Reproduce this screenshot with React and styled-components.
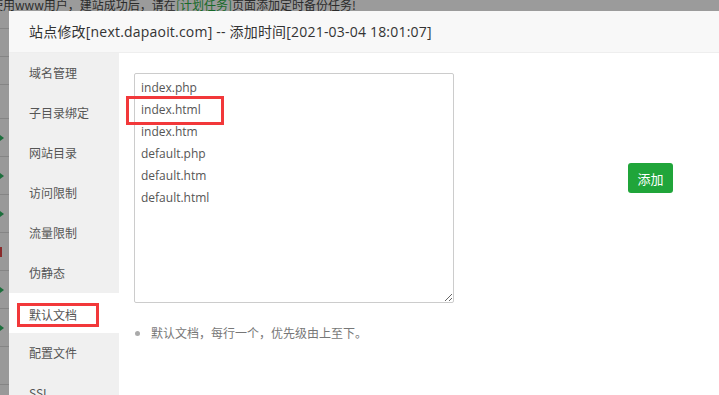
import React from 'react';
import styled, { createGlobalStyle } from 'styled-components';

const GlobalStyle = createGlobalStyle`
  html, body {
    margin: 0;
    padding: 0;
    background: #9b9b9b;
    overflow: hidden;
  }
  body {
    font-family: "Open Sans", "Noto Sans CJK SC", sans-serif;
  }
`;

const menu = ['域名管理', '子目录绑定', '网站目录', '访问限制', '流量限制', '伪静态', '默认文档', '配置文件', 'SSL'];
const docs = ['index.php', 'index.html', 'index.htm', 'default.php', 'default.htm', 'default.html'];

// rows of the page that sits under the dialog shade
const bgRows = [
  { h: 18 }, { h: 28 }, { h: 28 }, { h: 34 },
  { h: 38, mark: 'arrow' }, { h: 38, mark: 'arrow' }, { h: 38, mark: 'arrow' },
  { h: 38, mark: 'red' }, { h: 38, mark: 'arrow' }, { h: 38, mark: 'arrow' }, { h: 38 },
];

function App() {
  return (
    <Page>
      <GlobalStyle />
      <Notice>
        使用www用户，建站成功后，请在<Link>[计划任务]</Link>页面添加定时备份任务!
      </Notice>
      <Body>
        <Strip>
          {bgRows.map((r, i) => (
            <StripRow key={i} style={{ height: r.h }}>
              {r.mark === 'arrow' && <Arrow />}
              {r.mark === 'red' && <RedMark />}
            </StripRow>
          ))}
        </Strip>
        <Dialog>
          <Title>站点修改[next.dapaoit.com] -- 添加时间[2021-03-04 18:01:07]</Title>
          <Main>
            <Side>
              {menu.map((m) => (
                <SideItem key={m} $active={m === '默认文档'}>
                  {m === '默认文档' ? <Marked>{m}</Marked> : m}
                </SideItem>
              ))}
            </Side>
            <Content>
              <Row>
                <AreaWrap>
                  <DocArea defaultValue={docs.join('\n')} spellCheck={false} />
                  <AreaMark />
                </AreaWrap>
                <AddButton>添加</AddButton>
              </Row>
              <Hints>
                <li>默认文档，每行一个，优先级由上至下。</li>
              </Hints>
            </Content>
          </Main>
        </Dialog>
      </Body>
    </Page>
  );
}

const Page = styled.div`
  width: 719px;
  height: 395px;
  display: grid;
  grid-template-rows: 11px 1fr;
  overflow: hidden;
`;

const Notice = styled.div`
  height: 11px;
  line-height: 10px;
  margin-left: -9px;
  font-size: 12px;
  font-family: "Noto Sans CJK SC", sans-serif;
  color: #2b2b2b;
  white-space: nowrap;
  overflow: hidden;
`;

const Link = styled.span`
  color: #176a2a;
`;

const Body = styled.div`
  display: flex;
  min-height: 0;
`;

const Strip = styled.div`
  width: 9px;
  flex: none;
  background: #999;
  display: flex;
  flex-direction: column;
`;

const StripRow = styled.div`
  flex: none;
  box-sizing: border-box;
  border-bottom: 1px solid #858585;
  display: flex;
  align-items: center;
`;

const Arrow = styled.span`
  width: 0;
  height: 0;
  border-top: 3px solid transparent;
  border-bottom: 3px solid transparent;
  border-left: 4px solid #1c6e3c;
`;

const RedMark = styled.span`
  width: 2px;
  height: 10px;
  background: #8a2b2b;
`;

const Dialog = styled.div`
  flex: 1;
  background: #fff;
  display: flex;
  flex-direction: column;
  min-width: 0;
`;

const Title = styled.div`
  height: 41px;
  line-height: 41px;
  padding-left: 20px;
  background: #f8f8f8;
  border-bottom: 1px solid #eee;
  font-size: 14px;
  letter-spacing: 0.2px;
  color: #333;
  white-space: nowrap;
`;

const Main = styled.div`
  flex: 1;
  display: flex;
`;

const Side = styled.div`
  width: 110px;
  flex: none;
  background: #f0f0f0;
`;

const SideItem = styled.div`
  height: 40px;
  line-height: 40px;
  padding-left: 20px;
  font-size: 12px;
  font-family: "Noto Sans CJK SC", sans-serif;
  color: #555;
  background: ${(p) => (p.$active ? '#fff' : 'transparent')};
`;

const Marked = styled.span`
  display: inline-block;
  margin-left: -12px;
  padding: 0 19px 0 9px;
  height: 18px;
  line-height: 18px;
  border: 3px solid #f2383a;
  vertical-align: middle;
`;

const Content = styled.div`
  flex: 1;
  padding: 20px 15px;
`;

const Row = styled.div`
  display: flex;
  align-items: flex-start;
`;

const AreaWrap = styled.div`
  position: relative;
  width: 320px;
  height: 230px;
`;

const DocArea = styled.textarea`
  display: block;
  box-sizing: border-box;
  width: 320px;
  height: 230px;
  margin: 0;
  padding: 3px 6px;
  border: 1px solid #ccc;
  border-radius: 2px;
  font-family: "Open Sans", "Noto Sans CJK SC", sans-serif;
  font-size: 12px;
  line-height: 22px;
  color: #555;
  outline: none;
`;

const AreaMark = styled.span`
  position: absolute;
  left: -8px;
  top: 23px;
  width: 98px;
  height: 29px;
  box-sizing: border-box;
  border: 3px solid #f2383a;
  pointer-events: none;
`;

const AddButton = styled.button`
  margin: 90px 0 0 174px;
  width: 45px;
  height: 30px;
  padding: 0;
  border: none;
  border-radius: 3px;
  background: #20a53a;
  color: #fff;
  font-size: 13px;
  font-family: "Noto Sans CJK SC", sans-serif;
`;

const Hints = styled.ul`
  margin: 20px 0 0;
  padding-left: 17px;
  font-size: 12px;
  line-height: 20px;
  color: #777;
  font-family: "Noto Sans CJK SC", sans-serif;
  li::marker {
    color: #aaa;
  }
`;

export default App;
